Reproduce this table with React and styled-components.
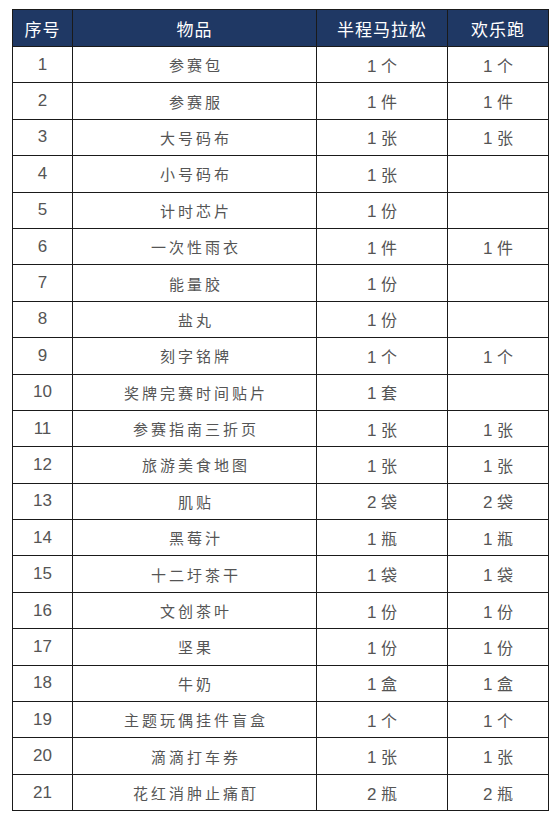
import React from "react";
import styled, { createGlobalStyle } from "styled-components";

const rows = [
  ["1", "参赛包", "1 个", "1 个"],
  ["2", "参赛服", "1 件", "1 件"],
  ["3", "大号码布", "1 张", "1 张"],
  ["4", "小号码布", "1 张", ""],
  ["5", "计时芯片", "1 份", ""],
  ["6", "一次性雨衣", "1 件", "1 件"],
  ["7", "能量胶", "1 份", ""],
  ["8", "盐丸", "1 份", ""],
  ["9", "刻字铭牌", "1 个", "1 个"],
  ["10", "奖牌完赛时间贴片", "1 套", ""],
  ["11", "参赛指南三折页", "1 张", "1 张"],
  ["12", "旅游美食地图", "1 张", "1 张"],
  ["13", "肌贴", "2 袋", "2 袋"],
  ["14", "黑莓汁", "1 瓶", "1 瓶"],
  ["15", "十二圩茶干", "1 袋", "1 袋"],
  ["16", "文创茶叶", "1 份", "1 份"],
  ["17", "坚果", "1 份", "1 份"],
  ["18", "牛奶", "1 盒", "1 盒"],
  ["19", "主题玩偶挂件盲盒", "1 个", "1 个"],
  ["20", "滴滴打车券", "1 张", "1 张"],
  ["21", "花红消肿止痛酊", "2 瓶", "2 瓶"],
];

const Global = createGlobalStyle`
  body {
    margin: 0;
    background: #fff;
    font-family: "Liberation Sans", "Noto Sans CJK SC", sans-serif;
  }
`;

const Page = styled.div`
  padding: 9px 0 0 12px;
`;

const Table = styled.table`
  border-collapse: collapse;
  width: 532px;
  table-layout: fixed;
`;

const HeadCell = styled.th`
  background: #1f3864;
  color: #fff;
  height: 36px;
  padding: 0;
  border: 1px solid #1a1a1a;
  font-family: "Noto Sans CJK SC", sans-serif;
  font-size: 17px;
  font-weight: 400;
  letter-spacing: 1px;
  text-align: center;
  width: ${(p) => p.w}px;
`;

const Cell = styled.td`
  height: 35.4px;
  padding: 0 0 0 ${(p) => (p.spaced ? 3 : 0)}px;
  border: 1px solid #1a1a1a;
  color: #555;
  text-align: center;
  font-family: ${(p) =>
    p.spaced
      ? `"Noto Sans CJK SC", sans-serif`
      : `"Liberation Sans", "Noto Sans CJK SC", sans-serif`};
  font-size: ${(p) => (p.spaced ? 15 : 17)}px;
  letter-spacing: ${(p) => (p.spaced ? 3 : 0)}px;
  white-space: nowrap;
`;

const Unit = styled.span`
  font-family: "Noto Sans CJK SC", sans-serif;
  font-size: 16px;
`;

const Qty = ({ text }) => {
  if (!text) return null;
  const [n, u] = text.split(" ");
  return (
    <>
      {n} <Unit>{u}</Unit>
    </>
  );
};

export default function App() {
  return (
    <Page>
      <Global />
      <Table>
        <thead>
          <tr>
            <HeadCell w={59}>序号</HeadCell>
            <HeadCell w={243}>物品</HeadCell>
            <HeadCell w={130}>半程马拉松</HeadCell>
            <HeadCell w={100}>欢乐跑</HeadCell>
          </tr>
        </thead>
        <tbody>
          {rows.map((r) => (
            <tr key={r[0]}>
              <Cell>{r[0]}</Cell>
              <Cell spaced>{r[1]}</Cell>
              <Cell>
                <Qty text={r[2]} />
              </Cell>
              <Cell>
                <Qty text={r[3]} />
              </Cell>
            </tr>
          ))}
        </tbody>
      </Table>
    </Page>
  );
}
